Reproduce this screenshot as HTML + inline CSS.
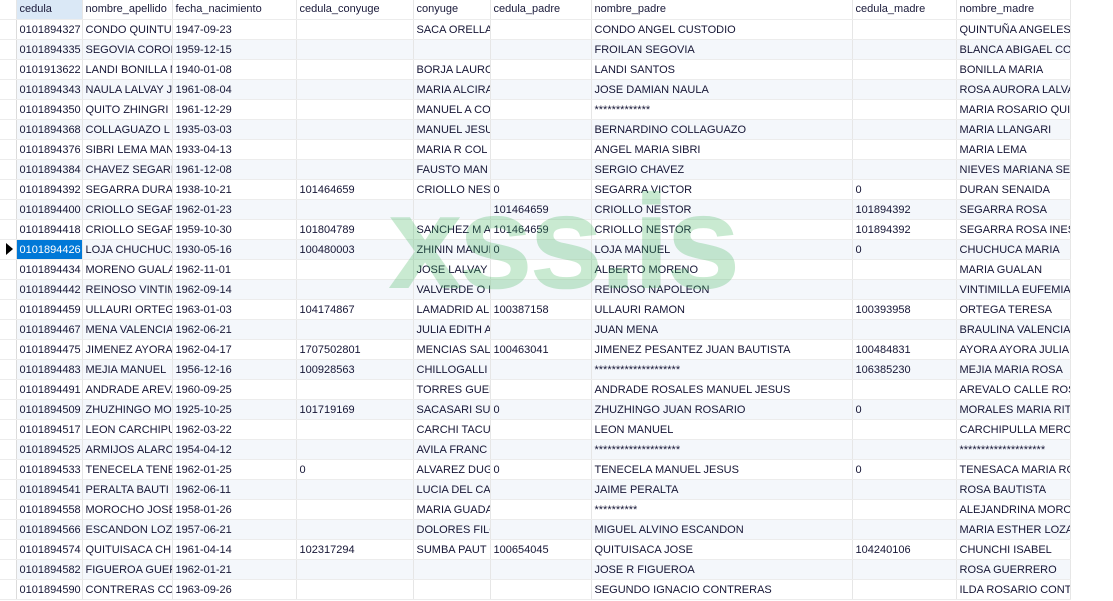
<!DOCTYPE html>
<html><head><meta charset="utf-8"><style>
html,body{margin:0;padding:0;background:#fff;width:1113px;height:601px;overflow:hidden}
table{position:absolute;left:0;top:0;width:1070px;border-collapse:collapse;table-layout:fixed;font-family:"Liberation Sans",sans-serif;font-size:11px;color:#151535}
td,th{height:17px;padding:2px 0 0 3px;border-right:1px solid #e6e6e6;border-bottom:1px solid #ececec;white-space:nowrap;overflow:hidden;text-overflow:clip;text-align:left;font-weight:normal;line-height:17px}
th{color:#1a1a3a;padding-top:0;height:19px;line-height:19px}
th.sel{background:#dae8f6}
tr.o td{background:#f4f7fb}
td.ind{padding:0;height:19px;background:#fff!important;border-right:1px solid #dcdcdc}
td.hl{background:#0078d7!important;color:#fff}
.wm{position:absolute;left:388px;top:176px;font-family:"Liberation Sans",sans-serif;font-weight:bold;font-size:134px;color:rgba(60,180,90,0.28);letter-spacing:-4px;line-height:1}
.arr{display:inline-block;width:0;height:0;border-top:6px solid transparent;border-bottom:6px solid transparent;border-left:7px solid #000;margin-left:6px;vertical-align:middle}
</style></head><body>
<table>
<colgroup><col style="width:16px"><col style="width:66px"><col style="width:90px"><col style="width:124px"><col style="width:117px"><col style="width:77px"><col style="width:101px"><col style="width:261px"><col style="width:104px"><col style="width:114px"></colgroup>
<tr><th style="padding:0"></th><th class="sel">cedula</th><th>nombre_apellido</th><th>fecha_nacimiento</th><th>cedula_conyuge</th><th>conyuge</th><th>cedula_padre</th><th>nombre_padre</th><th>cedula_madre</th><th>nombre_madre</th></tr>
<tr><td class="ind"></td><td>0101894327</td><td>CONDO QUINTUÑA</td><td>1947-09-23</td><td></td><td>SACA ORELLANA</td><td></td><td>CONDO ANGEL CUSTODIO</td><td></td><td>QUINTUÑA ANGELES</td></tr>
<tr class="o"><td class="ind"></td><td>0101894335</td><td>SEGOVIA CORONEL</td><td>1959-12-15</td><td></td><td></td><td></td><td>FROILAN SEGOVIA</td><td></td><td>BLANCA ABIGAEL CO</td></tr>
<tr><td class="ind"></td><td>0101913622</td><td>LANDI BONILLA M</td><td>1940-01-08</td><td></td><td>BORJA LAURO</td><td></td><td>LANDI SANTOS</td><td></td><td>BONILLA MARIA</td></tr>
<tr class="o"><td class="ind"></td><td>0101894343</td><td>NAULA LALVAY J</td><td>1961-08-04</td><td></td><td>MARIA ALCIRA</td><td></td><td>JOSE DAMIAN NAULA</td><td></td><td>ROSA AURORA LALVAY</td></tr>
<tr><td class="ind"></td><td>0101894350</td><td>QUITO ZHINGRI</td><td>1961-12-29</td><td></td><td>MANUEL A CO</td><td></td><td>*************</td><td></td><td>MARIA ROSARIO QUI</td></tr>
<tr class="o"><td class="ind"></td><td>0101894368</td><td>COLLAGUAZO L</td><td>1935-03-03</td><td></td><td>MANUEL JESUS</td><td></td><td>BERNARDINO COLLAGUAZO</td><td></td><td>MARIA LLANGARI</td></tr>
<tr><td class="ind"></td><td>0101894376</td><td>SIBRI LEMA MAN</td><td>1933-04-13</td><td></td><td>MARIA R COL</td><td></td><td>ANGEL MARIA SIBRI</td><td></td><td>MARIA LEMA</td></tr>
<tr class="o"><td class="ind"></td><td>0101894384</td><td>CHAVEZ SEGARRA</td><td>1961-12-08</td><td></td><td>FAUSTO MAN</td><td></td><td>SERGIO CHAVEZ</td><td></td><td>NIEVES MARIANA SE</td></tr>
<tr><td class="ind"></td><td>0101894392</td><td>SEGARRA DURAN</td><td>1938-10-21</td><td>101464659</td><td>CRIOLLO NESTOR</td><td>0</td><td>SEGARRA VICTOR</td><td>0</td><td>DURAN SENAIDA</td></tr>
<tr class="o"><td class="ind"></td><td>0101894400</td><td>CRIOLLO SEGAR</td><td>1962-01-23</td><td></td><td></td><td>101464659</td><td>CRIOLLO NESTOR</td><td>101894392</td><td>SEGARRA ROSA</td></tr>
<tr><td class="ind"></td><td>0101894418</td><td>CRIOLLO SEGAR</td><td>1959-10-30</td><td>101804789</td><td>SANCHEZ M A</td><td>101464659</td><td>CRIOLLO NESTOR</td><td>101894392</td><td>SEGARRA ROSA INES</td></tr>
<tr class="o"><td class="ind"><span class="arr"></span></td><td class="hl">0101894426</td><td>LOJA CHUCHUCA</td><td>1930-05-16</td><td>100480003</td><td>ZHININ MANUEL</td><td>0</td><td>LOJA MANUEL</td><td>0</td><td>CHUCHUCA MARIA</td></tr>
<tr><td class="ind"></td><td>0101894434</td><td>MORENO GUALAN</td><td>1962-11-01</td><td></td><td>JOSE LALVAY</td><td></td><td>ALBERTO MORENO</td><td></td><td>MARIA GUALAN</td></tr>
<tr class="o"><td class="ind"></td><td>0101894442</td><td>REINOSO VINTIM</td><td>1962-09-14</td><td></td><td>VALVERDE O E</td><td></td><td>REINOSO NAPOLEON</td><td></td><td>VINTIMILLA EUFEMIA</td></tr>
<tr><td class="ind"></td><td>0101894459</td><td>ULLAURI ORTEGA</td><td>1963-01-03</td><td>104174867</td><td>LAMADRID AL</td><td>100387158</td><td>ULLAURI RAMON</td><td>100393958</td><td>ORTEGA TERESA</td></tr>
<tr class="o"><td class="ind"></td><td>0101894467</td><td>MENA VALENCIA</td><td>1962-06-21</td><td></td><td>JULIA EDITH A</td><td></td><td>JUAN MENA</td><td></td><td>BRAULINA VALENCIA</td></tr>
<tr><td class="ind"></td><td>0101894475</td><td>JIMENEZ AYORA</td><td>1962-04-17</td><td>1707502801</td><td>MENCIAS SAL</td><td>100463041</td><td>JIMENEZ PESANTEZ JUAN BAUTISTA</td><td>100484831</td><td>AYORA AYORA JULIA</td></tr>
<tr class="o"><td class="ind"></td><td>0101894483</td><td>MEJIA MANUEL</td><td>1956-12-16</td><td>100928563</td><td>CHILLOGALLI</td><td></td><td>********************</td><td>106385230</td><td>MEJIA MARIA ROSA</td></tr>
<tr><td class="ind"></td><td>0101894491</td><td>ANDRADE AREVALO</td><td>1960-09-25</td><td></td><td>TORRES GUER</td><td></td><td>ANDRADE ROSALES MANUEL JESUS</td><td></td><td>AREVALO CALLE ROS</td></tr>
<tr class="o"><td class="ind"></td><td>0101894509</td><td>ZHUZHINGO MO</td><td>1925-10-25</td><td>101719169</td><td>SACASARI SUS</td><td>0</td><td>ZHUZHINGO JUAN ROSARIO</td><td>0</td><td>MORALES MARIA RIT</td></tr>
<tr><td class="ind"></td><td>0101894517</td><td>LEON CARCHIPU</td><td>1962-03-22</td><td></td><td>CARCHI TACU</td><td></td><td>LEON MANUEL</td><td></td><td>CARCHIPULLA MERC</td></tr>
<tr class="o"><td class="ind"></td><td>0101894525</td><td>ARMIJOS ALARC</td><td>1954-04-12</td><td></td><td>AVILA FRANC</td><td></td><td>********************</td><td></td><td>********************</td></tr>
<tr><td class="ind"></td><td>0101894533</td><td>TENECELA TENE</td><td>1962-01-25</td><td>0</td><td>ALVAREZ DUG</td><td>0</td><td>TENECELA MANUEL JESUS</td><td>0</td><td>TENESACA MARIA RO</td></tr>
<tr class="o"><td class="ind"></td><td>0101894541</td><td>PERALTA BAUTI</td><td>1962-06-11</td><td></td><td>LUCIA DEL CA</td><td></td><td>JAIME PERALTA</td><td></td><td>ROSA BAUTISTA</td></tr>
<tr><td class="ind"></td><td>0101894558</td><td>MOROCHO JOSE</td><td>1958-01-26</td><td></td><td>MARIA GUADA</td><td></td><td>**********</td><td></td><td>ALEJANDRINA MORO</td></tr>
<tr class="o"><td class="ind"></td><td>0101894566</td><td>ESCANDON LOZ</td><td>1957-06-21</td><td></td><td>DOLORES FILO</td><td></td><td>MIGUEL ALVINO ESCANDON</td><td></td><td>MARIA ESTHER LOZA</td></tr>
<tr><td class="ind"></td><td>0101894574</td><td>QUITUISACA CH</td><td>1961-04-14</td><td>102317294</td><td>SUMBA PAUT</td><td>100654045</td><td>QUITUISACA JOSE</td><td>104240106</td><td>CHUNCHI ISABEL</td></tr>
<tr class="o"><td class="ind"></td><td>0101894582</td><td>FIGUEROA GUER</td><td>1962-01-21</td><td></td><td></td><td></td><td>JOSE R FIGUEROA</td><td></td><td>ROSA GUERRERO</td></tr>
<tr><td class="ind"></td><td>0101894590</td><td>CONTRERAS CO</td><td>1963-09-26</td><td></td><td></td><td></td><td>SEGUNDO IGNACIO CONTRERAS</td><td></td><td>ILDA ROSARIO CONT</td></tr>
</table>
<div class="wm">xss.is</div>
</body></html>
